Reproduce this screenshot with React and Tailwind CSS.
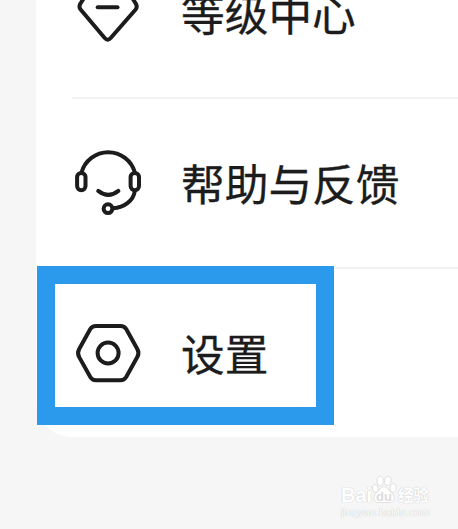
const iconProps = {
  viewBox: '0 0 72 72',
  fill: 'none',
  stroke: '#1c1c1c',
  strokeWidth: 4,
  strokeLinecap: 'round',
  strokeLinejoin: 'round',
  className: 'size-[72px] shrink-0',
};

const LevelIcon = () => (
  <svg {...iconProps}>
    <path d="M18.5 13.5h35q2 0 3.200 1.800l7 11.200q2.200 3.200-.3 6.200L38.700 61q-3 3.400-6 0L8.800 32.700q-2.500-3-.3-6.200l7-11.200q1.200-1.800 3-1.800z" />
    <path d="M25.700 30.200h19.800" />
  </svg>
);

const HelpIcon = () => (
  <svg {...iconProps}>
    <path d="M9.500 25.500A27.700 27.700 0 0 1 62.900 25.500" />
    <rect x="5.100" y="25.900" width="8.400" height="17.300" rx="4.200" />
    <rect x="58.600" y="25.900" width="8.400" height="17.300" rx="4.200" />
    <path d="M26.200 43.900q10.100 8 20.200 0" />
    <circle cx="36" cy="61.700" r="4.400" />
    <path d="M41 61.300C52.500 60.500 61.500 53.500 62.800 44" />
  </svg>
);

const SettingsIcon = () => (
  <svg {...iconProps}>
    <path d="M24 8.900h24.500q3.800 0 5.700 3.200l11.100 19.800q2.300 4.100 0 8.200L54.200 60q-1.900 3.200-5.700 3.200H24q-3.800 0-5.700-3.200L7.200 40.100q-2.300-4.100 0-8.200l11.100-19.800q1.900-3.200 5.700-3.200z" />
    <circle cx="36.100" cy="36" r="10.500" />
  </svg>
);

const rows = [
  { label: '等级中心', Icon: LevelIcon },
  { label: '帮助与反馈', Icon: HelpIcon },
  { label: '设置', Icon: SettingsIcon },
];

const MenuRow = ({ label, Icon, last }) => (
  <div className="pl-9">
    <div
      className={`flex items-center ${last ? 'h-[168px]' : 'h-[170px] border-b-2 border-[#f2f2f2]'}`}
    >
      <Icon />
      <span className="mb-[2px] ml-[37px] whitespace-nowrap text-[43.7px] leading-[60px] [-webkit-text-stroke:0.3px_#1c1c1c]">
        {label}
      </span>
    </div>
  </div>
);

const Watermark = () => (
  <div className="absolute left-[341px] top-[474px] w-[96px] font-['Liberation_Sans','Noto_Sans_CJK_SC',sans-serif] text-white [text-shadow:0_0_1px_#cccccc,0_0_1px_#cccccc]">
    <div className="flex h-[31px] items-end">
      <span className="w-[30px] text-[20px] font-bold leading-[20px]">Bai</span>
      <div className="relative h-[31px] w-[26px] shrink-0">
        <svg viewBox="0 0 27 31" className="size-full" fill="#fff" stroke="#d8d8d8" strokeWidth=".8">
          <ellipse cx="4.500" cy="14.500" rx="3" ry="4.300" transform="rotate(-15 4.500 14.500)" />
          <ellipse cx="9.500" cy="6.500" rx="3.300" ry="4.800" />
          <ellipse cx="17.500" cy="6.500" rx="3.300" ry="4.800" transform="rotate(10 17.500 6.500)" />
          <ellipse cx="23" cy="14" rx="3.200" ry="4.500" transform="rotate(10 23 14)" />
          <path d="M13.500 12.500c3.500 0 5 4 7.500 6.200 5 4.300 3.500 10.300-1.500 10.300h-12c-5 0-6.500-6-1.500-10.300 2.500-2.200 4-6.200 7.500-6.200z" />
        </svg>
        <span className="absolute inset-x-0 top-[16px] text-center text-[13px] font-bold leading-[13px] text-[#dcdcdc] [text-shadow:none]">
          du
        </span>
      </div>
      <span className="ml-px whitespace-nowrap text-[15.5px] font-bold leading-[18px]">经验</span>
    </div>
    <div className="mt-px whitespace-nowrap text-[11px] leading-[12px]">jingyan.baidu.com</div>
  </div>
);

export default function App() {
  return (
    <div className="relative h-[529px] w-[458px] overflow-hidden bg-[#f6f6f6] font-['Noto_Sans_CJK_SC',sans-serif] text-[#1c1c1c]">
      <div className="-mt-[71px] ml-9 rounded-bl-[36px] bg-white">
        {rows.map((row, i) => (
          <MenuRow key={row.label} {...row} last={i === rows.length - 1} />
        ))}
      </div>

      {/* highlight frame around the settings row */}
      <div className="absolute left-[37px] top-[266px] h-[159px] w-[297px] border-[18px] border-[#2b9aec]" />

      <Watermark />
    </div>
  );
}
